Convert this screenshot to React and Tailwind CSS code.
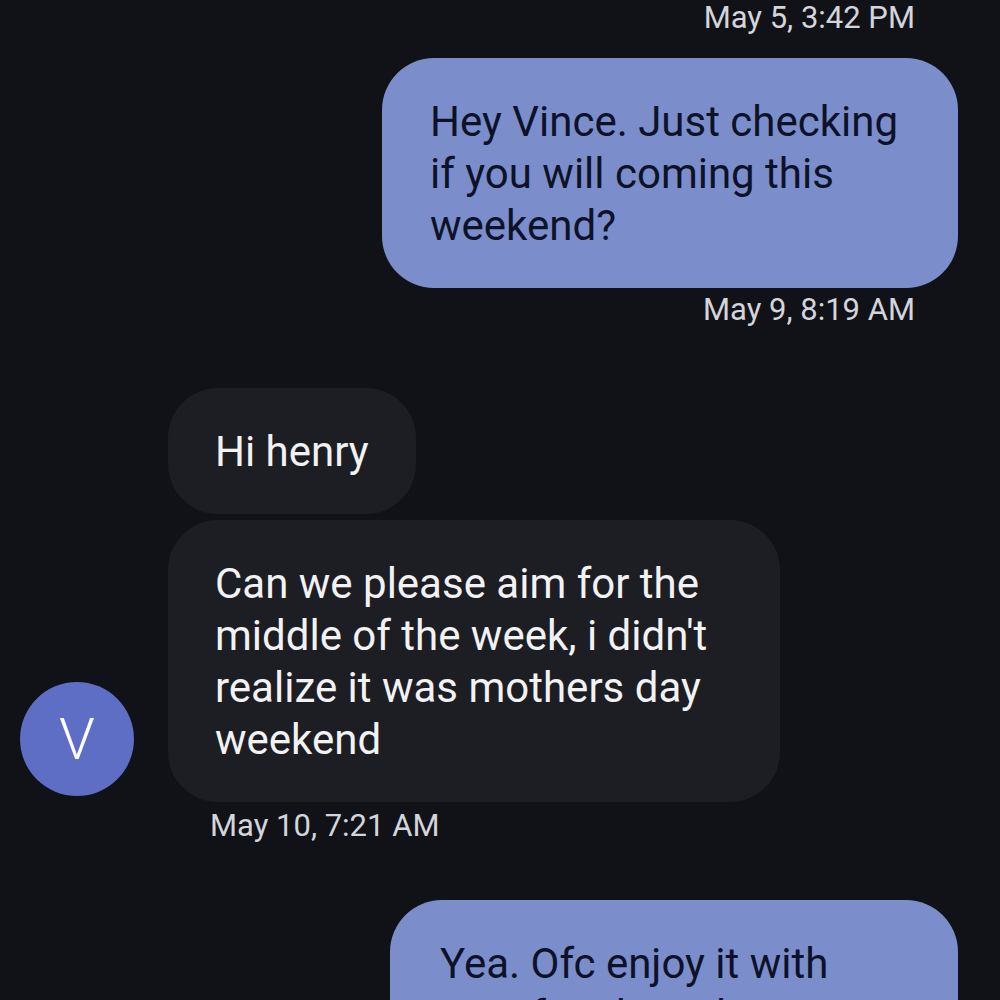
const Stamp = ({ children, className }) => (
  <div className={`text-[31px] leading-[36px] text-[#d4d5dc] ${className}`}>{children}</div>
)

const Sent = ({ children, className }) => (
  <div className={`bg-[#7b8ecb] text-[#0d1228] rounded-[52px] px-[48px] pt-[38px] pb-[36px] text-[42px] leading-[52px] ${className}`}>
    {children}
  </div>
)

const Received = ({ children, className }) => (
  <div className={`bg-[#1d1e23] text-[#f2f2f4] rounded-[50px] px-[47px] pt-[38px] pb-[36px] text-[42px] leading-[52px] ${className}`}>
    {children}
  </div>
)

export default function App() {
  return (
    <div className="w-[1000px] h-[1000px] overflow-hidden bg-[#111217] flex flex-col" style={{ fontFamily: 'Roboto, "Noto Sans", sans-serif' }}>
      <Stamp className="self-end mr-[85px]">May 5, 3:42 PM</Stamp>

      <Sent className="self-end mr-[42px] mt-[22px] w-[576px]">
        Hey Vince. Just checking if you will coming this weekend?
      </Sent>
      <Stamp className="self-end mr-[85px] mt-[4px]">May 9, 8:19 AM</Stamp>

      <Received className="ml-[168px] mt-[60px] self-start">Hi henry</Received>

      <div className="flex items-end mt-[6px]">
        <div className="ml-[20px] mb-[6px] w-[114px] h-[114px] rounded-full bg-[#5e6ec4] flex items-center justify-center text-white text-[58px] font-light">
          V
        </div>
        <Received className="ml-[34px] w-[612px]">
          Can we please aim for the middle of the week, i didn't realize it was mothers day weekend
        </Received>
      </div>
      <Stamp className="ml-[210px] mt-[6px]">May 10, 7:21 AM</Stamp>

      <Sent className="self-end mr-[42px] mt-[56px] w-[568px] shrink-0 !pl-[50px]">
        Yea. Ofc enjoy it with your family and we can meet up later in the week
      </Sent>
    </div>
  )
}
